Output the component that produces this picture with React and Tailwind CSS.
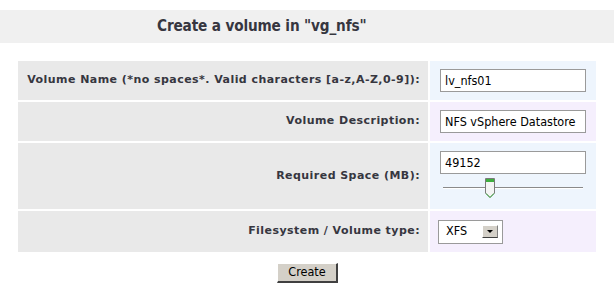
import { useState } from "react";

const labelCls =
  "bg-[#e9e9e9] flex items-center justify-end pr-2 font-bold text-[11px] tracking-[0.45px] text-[#363640] font-['DejaVu_Sans',sans-serif]";

const inputCls =
  "w-[146px] h-[23px] border border-[#9a9a9a] bg-white px-[4px] text-[12.5px] text-black font-['DejaVu_Sans_Condensed','DejaVu_Sans',sans-serif] outline-none";

function Slider() {
  return (
    <div className="relative w-[140px] h-[22px] ml-[3px] mt-[3px]">
      <div className="absolute left-0 right-0 top-[10px] h-[1px] bg-[#8a8a8a]" />
      <div className="absolute left-0 right-0 top-[11px] h-[1px] bg-white" />
      <svg
        className="absolute left-[41px] top-0"
        width="12"
        height="22"
        viewBox="0 0 12 22"
      >
        <path
          d="M1.5 1.5 H10.5 V16 L6 20.5 L1.5 16 Z"
          fill="#f4f4f4"
          stroke="#7a7a7a"
          strokeWidth="1"
        />
        <rect x="2" y="2" width="8" height="3" fill="#3fae3f" />
        <path d="M2 16.5 L6 20.5 L10 16.5" fill="none" stroke="#3fae3f" strokeWidth="1" />
      </svg>
    </div>
  );
}

export default function App() {
  const [name, setName] = useState("lv_nfs01");
  const [desc, setDesc] = useState("NFS vSphere Datastore");
  const [size, setSize] = useState("49152");

  return (
    <div className="w-[614px] h-[292px] bg-white pt-[10px] font-['DejaVu_Sans',sans-serif]">
      <div className="h-[33px] bg-[#f0f0f0] flex items-center pl-[157px]">
        <h2 className="text-[15.2px] tracking-[-0.15px] font-bold text-[#363640] font-['DejaVu_Sans_Condensed','DejaVu_Sans',sans-serif]">
          Create a volume in "vg_nfs"
        </h2>
      </div>

      <div className="mx-[18px] mt-[18px] grid grid-cols-[410px_166px] gap-[2px]">
        <div className={labelCls + " h-[39px]"}>
          Volume Name (*no spaces*. Valid characters [a-z,A-Z,0-9]):
        </div>
        <div className="bg-[#eef5fd] flex items-center pl-[10px]">
          <input value={name} onChange={(e) => setName(e.target.value)} className={inputCls} />
        </div>

        <div className={labelCls + " h-[39px]"}>Volume Description:</div>
        <div className="bg-[#f5effd] flex items-center pl-[10px]">
          <input value={desc} onChange={(e) => setDesc(e.target.value)} className={inputCls} />
        </div>

        <div className={labelCls + " h-[66px]"}>Required Space (MB):</div>
        <div className="bg-[#eef5fd] flex flex-col pl-[10px] pt-[8px]">
          <input value={size} onChange={(e) => setSize(e.target.value)} className={inputCls} />
          <Slider />
        </div>

        <div className={labelCls + " h-[41px]"}>Filesystem / Volume type:</div>
        <div className="bg-[#f5effd] flex items-center pl-[8px]">
          <div className="w-[65px] h-[24px] border border-[#9a9a9a] bg-white flex items-center justify-between pl-[7px] pr-[4px]">
            <span className="text-[12.5px] text-black font-['DejaVu_Sans_Condensed','DejaVu_Sans',sans-serif]">XFS</span>
            <div className="w-[16px] h-[13px] bg-[#d4d0c8] border-t border-l border-t-white border-l-white border-b border-r border-b-[#404040] border-r-[#808080] flex items-center justify-center">
              <div className="w-0 h-0 border-l-[3px] border-r-[3px] border-t-[3px] border-l-transparent border-r-transparent border-t-black" />
            </div>
          </div>
        </div>
      </div>

      <div className="flex justify-center mt-[11px]">
        <button className="ml-[1px] w-[61px] h-[20px] bg-[#d4d0c8] border-t border-l border-t-white border-l-white border-b-2 border-r-2 border-b-[#404040] border-r-[#404040] text-[12.5px] text-black font-['DejaVu_Sans_Condensed','DejaVu_Sans',sans-serif] leading-none">
          Create
        </button>
      </div>
    </div>
  );
}
